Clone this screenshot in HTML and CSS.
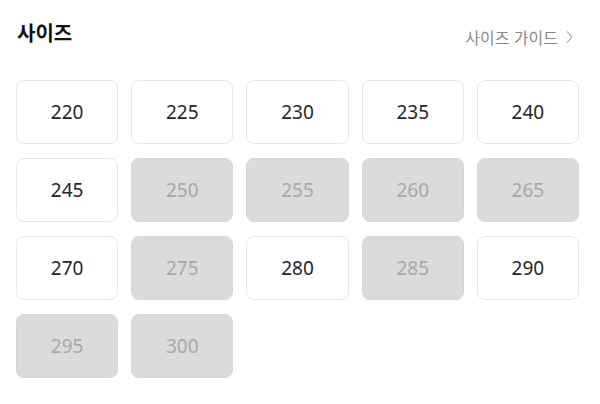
FILE: index.html
```html
<!DOCTYPE html>
<html lang="ko">
<head>
<meta charset="utf-8">
<link rel="stylesheet" href="styles.css">
</head>
<body>
<div class="panel">
  <div class="header">
    <h2 class="title">사이즈</h2>
    <a class="guide">사이즈 가이드<svg class="chev" width="7" height="14" viewBox="0 0 7 14"><path d="M1 1.5 L6 7 L1 12.5" fill="none" stroke="#a0a0a0" stroke-width="1.1"/></svg></a>
  </div>
  <div class="grid">
    <div class="size">220</div>
    <div class="size">225</div>
    <div class="size">230</div>
    <div class="size">235</div>
    <div class="size">240</div>
    <div class="size">245</div>
    <div class="size off">250</div>
    <div class="size off">255</div>
    <div class="size off">260</div>
    <div class="size off">265</div>
    <div class="size">270</div>
    <div class="size off">275</div>
    <div class="size">280</div>
    <div class="size off">285</div>
    <div class="size">290</div>
    <div class="size off">295</div>
    <div class="size off">300</div>
  </div>
</div>
</body>
</html>
```

FILE: styles.css
```css
html, body {
  margin: 0;
  padding: 0;
  background: #fff;
}
.panel {
  padding: 0 21px 0 16px;
  font-family: "Noto Sans", "Noto Sans CJK KR", sans-serif;
}
.header {
  display: flex;
  justify-content: space-between;
  align-items: flex-start;
  height: 80px;
}
.title {
  margin: 19px 0 0 0;
  font-size: 20px;
  font-weight: 700;
  color: #111;
  line-height: 28px;
  padding-left: 1px;
  font-family: "Noto Sans CJK KR", sans-serif;
}
.guide {
  display: flex;
  align-items: center;
  gap: 8px;
  margin-top: 27px;
  margin-right: 6px;
  font-size: 16px;
  color: #8a8a8a;
  line-height: 20px;
  font-family: "Noto Sans CJK KR", sans-serif;
}
.grid {
  display: grid;
  grid-template-columns: repeat(5, 1fr);
  column-gap: 13px;
  row-gap: 14px;
}
.size {
  height: 64px;
  box-sizing: border-box;
  border: 1px solid #e6e6e6;
  border-radius: 8px;
  display: flex;
  align-items: center;
  justify-content: center;
  font-size: 19px;
  color: #262626;
  font-family: "Noto Sans", sans-serif;
}
.size.off {
  background: #dbdbdb;
  border-color: #d6d6d6;
  color: #a9a9a9;
}
```
